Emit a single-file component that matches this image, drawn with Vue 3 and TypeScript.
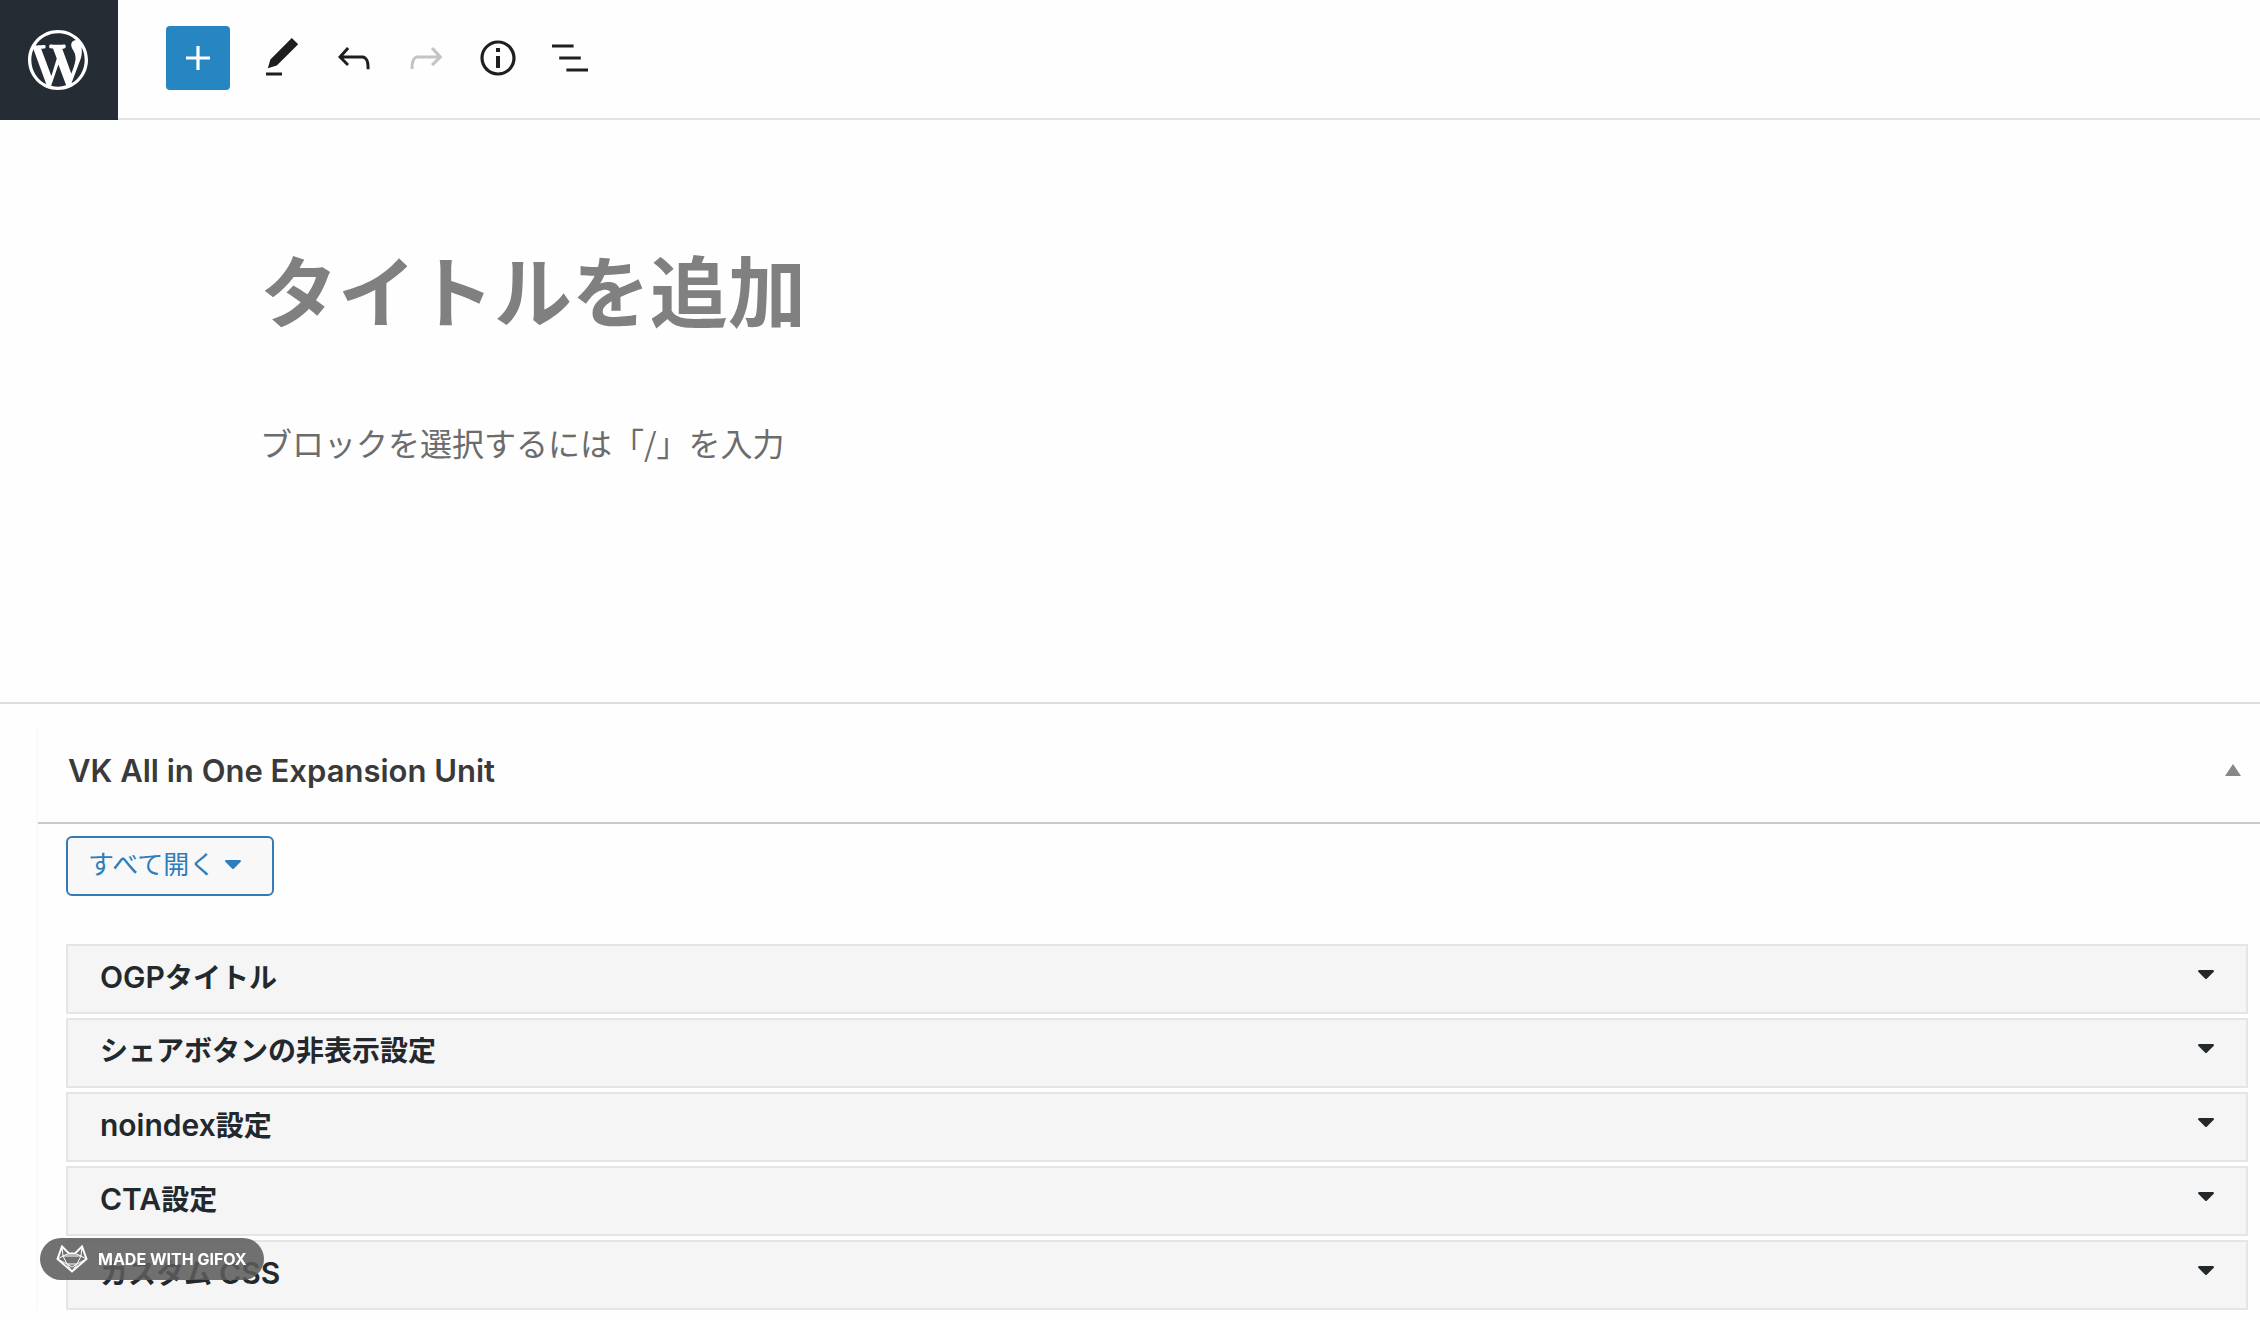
<script setup lang="ts">
import { computed, ref } from 'vue'

interface Tool {
  label: string
  path: string
  disabled?: boolean
}

interface Section {
  id: string
  parts: string[]
  open: boolean
}

const tools: Tool[] = [
  {
    label: 'ツール',
    path: 'M20.1 5.1L16.9 2 6.2 12.7l-1.3 4.4 4.5-1.3L20.1 5.1zM4 20.8h8v-1.5H4v1.5z',
  },
  {
    label: '元に戻す',
    path: 'M18.3 11.7c-.6-.6-1.4-.9-2.3-.9H6.7l2.9-3.3-1.1-1-4.5 5L8.5 16l1-1-2.7-2.7H16c.5 0 .9.2 1.3.5 1 1 1 3.4 1 4.5v.3h1.5v-.2c0-1.5 0-4.3-1.5-5.7z',
  },
  {
    label: 'やり直す',
    path: 'M15.6 6.5l-1.1 1 2.9 3.3H8c-.9 0-1.7.3-2.3.9-1.4 1.5-1.4 4.2-1.4 5.6v.2h1.5v-.3c0-1.1 0-3.5 1-4.5.3-.3.7-.5 1.3-.5h9.2L14.5 15l1.1 1.1 4.6-4.6-4.6-5z',
    disabled: true,
  },
  {
    label: '詳細',
    path: 'M12 3.2c-4.8 0-8.8 3.9-8.8 8.8 0 4.8 3.9 8.8 8.8 8.8 4.8 0 8.8-3.9 8.8-8.8 0-4.8-4-8.8-8.8-8.8zm0 16c-4 0-7.2-3.3-7.2-7.2C4.8 8 8 4.8 12 4.8s7.2 3.3 7.2 7.2c0 4-3.2 7.2-7.2 7.2zM11 17h2v-6h-2v6zm0-8h2V7h-2v2z',
  },
  {
    label: 'リスト表示',
    path: 'M13.8 5.2H3v1.5h10.8V5.2zm-3.6 12v1.5H21v-1.5H10.2zm7.2-6H6.6v1.5h10.8v-1.5z',
  },
]

const title = ref('')
const body = ref('')

// Latin runs are set a little larger than the Japanese around them.
const sections = ref<Section[]>(
  ['OGPタイトル', 'シェアボタンの非表示設定', 'noindex設定', 'CTA設定', 'カスタム CSS'].map((t) => ({
    id: t,
    parts: t.split(/([A-Za-z]+)/).filter(Boolean),
    open: false,
  })),
)

const isLatin = (part: string): boolean => /^[A-Za-z]/.test(part)

const allOpen = computed(() => sections.value.every((s) => s.open))

function toggleAll(): void {
  const next = !allOpen.value
  sections.value.forEach((s) => (s.open = next))
}
</script>

<template>
  <div class="editor">
    <header class="topbar">
      <a class="home" href="#" aria-label="投稿一覧を表示">
        <svg viewBox="-2 -2 24 24" aria-hidden="true">
          <path
            d="M20 10c0-5.51-4.49-10-10-10C4.48 0 0 4.49 0 10c0 5.52 4.48 10 10 10 5.51 0 10-4.48 10-10zM7.78 15.37L4.37 6.22c.55-.02 1.17-.08 1.17-.08.5-.06.44-1.13-.06-1.11 0 0-1.45.11-2.37.11-.18 0-.37 0-.58-.01C4.12 2.69 6.87 1.11 10 1.11c2.33 0 4.45.87 6.05 2.34-.68-.11-1.65.39-1.65 1.58 0 .74.45 1.36.9 2.1.35.61.55 1.36.55 2.46 0 1.49-1.4 5-1.4 5l-3.03-8.37c.54-.02.82-.17.82-.17.5-.05.44-1.25-.06-1.22 0 0-1.44.12-2.38.12-.87 0-2.33-.12-2.33-.12-.5-.03-.56 1.2-.06 1.22l.92.08 1.26 3.41zM17.41 10c.24-.64.74-1.87.43-4.25.7 1.29 1.05 2.71 1.05 4.25 0 3.29-1.73 6.24-4.4 7.78.97-2.59 1.94-5.2 2.92-7.78zM6.1 18.09C3.12 16.65 1.11 13.53 1.11 10c0-1.3.23-2.48.72-3.59C3.25 10.3 4.67 14.2 6.1 18.09zm4.03-6.63l2.58 6.98c-.86.29-1.76.45-2.71.45-.79 0-1.57-.11-2.29-.33.81-2.38 1.62-4.74 2.42-7.1z"
          />
        </svg>
      </a>
      <div class="toolbar" role="toolbar" aria-label="文書ツール">
        <button class="tool add" type="button" aria-label="ブロックを追加">
          <svg viewBox="0 0 24 24" aria-hidden="true">
            <path d="M18 11.2h-5.2V6h-1.6v5.2H6v1.6h5.2V18h1.6v-5.2H18z" />
          </svg>
        </button>
        <button
          v-for="tool in tools"
          :key="tool.label"
          class="tool"
          type="button"
          :aria-label="tool.label"
          :disabled="tool.disabled"
        >
          <svg viewBox="0 0 24 24" aria-hidden="true"><path :d="tool.path" /></svg>
        </button>
      </div>
    </header>

    <main class="canvas">
      <input v-model="title" class="title" type="text" aria-label="タイトル" placeholder="タイトルを追加" />
      <input
        v-model="body"
        class="paragraph"
        type="text"
        aria-label="ブロック"
        placeholder="ブロックを選択するには「/」を入力"
      />
    </main>

    <section class="metaboxes">
      <div class="metabox">
        <div class="metabox-head">
          <h2>VK All in One Expansion Unit</h2>
          <button class="collapse" type="button" aria-label="パネルを閉じる">
            <svg viewBox="0 0 16 12" aria-hidden="true"><path d="M8 0l8 12H0z" /></svg>
          </button>
        </div>
        <div class="metabox-body">
          <button class="open-all" type="button" @click="toggleAll">
            <span>すべて開く</span>
            <svg viewBox="0 0 16 9" aria-hidden="true">
              <path d="M1 0h14q1 0 1 1.500L9 8.500q-1 1-2 0L0 1.500q0-1.500 1-1.500z" />
            </svg>
          </button>
          <ul class="sections">
            <li v-for="section in sections" :key="section.id">
              <button
                class="section"
                type="button"
                :aria-expanded="section.open"
                @click="section.open = !section.open"
              >
                <span class="section-title"><span
                  v-for="part in section.parts"
                  :key="part"
                  :class="{ latin: isLatin(part) }"
                >{{ part }}</span></span>
                <svg viewBox="0 0 16 9" aria-hidden="true">
                  <path d="M1 0h14q1 0 1 1.500L9 8.500q-1 1-2 0L0 1.500q0-1.500 1-1.500z" />
                </svg>
              </button>
            </li>
          </ul>
        </div>
      </div>
    </section>

    <a class="badge" href="#">
      <svg viewBox="0 0 32 28" aria-hidden="true">
        <path class="outline" d="M6 1.500L13 8.500h6L26 1.500 30.500 14 16 26.500 1.500 14z" />
        <path d="M6 1.500L7 11 1.500 14 11 19l5 7.500 5-7.500 9.500-5L25 11l1-9.500M13 8.500L7 11h18l-6-2.500M7 11l4 8h10l4-8M11 19l5 3 5-3" />
      </svg>
      <span>MADE WITH GIFOX</span>
    </a>
  </div>
</template>

<style>
body {
  margin: 0;
  background: #fefefe;
}
</style>

<style scoped>
.editor {
  min-height: 100vh;
  background: #fefefe;
  color: #23282d;
  font-family: Inter, 'Noto Sans CJK JP', sans-serif;
}

button,
input {
  margin: 0;
  padding: 0;
  border: 0;
  background: none;
  color: inherit;
  font-family: inherit;
}

svg {
  display: block;
  fill: currentColor;
}

.topbar {
  display: flex;
  height: 120px;
}

.home {
  display: flex;
  align-items: center;
  width: 96px;
  padding-left: 22px;
  background: #262c34;
  color: #fff;
}

.home svg {
  width: 72px;
  height: 72px;
}

.toolbar {
  display: flex;
  flex: 1;
  align-items: center;
  gap: 8px;
  padding: 0 0 2px 48px;
  border-bottom: 2px solid #e2e2e2;
}

.tool {
  display: flex;
  align-items: center;
  justify-content: center;
  width: 64px;
  height: 64px;
  border-radius: 4px;
  color: #1e1e1e;
}

.tool svg {
  width: 48px;
  height: 48px;
}

.tool.add {
  margin-right: 12px;
  background: #2586c2;
  color: #fff;
}

.tool:disabled {
  color: #c4c4c4;
}

.canvas {
  display: flex;
  flex-direction: column;
  gap: 50px;
  padding: 108px 260px 216px;
}

.title,
.paragraph {
  width: 100%;
  outline: 0;
  font-family: 'Noto Sans CJK JP', sans-serif;
}

.title {
  height: 120px;
  font-size: 78px;
  font-weight: 700;
}

.paragraph {
  height: 88px;
  font-size: 32px;
}

.title::placeholder {
  color: #808080;
  opacity: 1;
}

.paragraph::placeholder {
  color: #6c6c6c;
  opacity: 1;
}

.metaboxes {
  padding: 24px 0 8px 36px;
  border-top: 2px solid #dedede;
}

.metabox {
  border-left: 2px solid #fafafa;
}

.metabox-head {
  display: flex;
  align-items: center;
  justify-content: space-between;
  height: 86px;
  padding: 0 19px 8px 30px;
  border-bottom: 2px solid #c9c9c9;
}

h2 {
  margin: 0;
  color: #3a3a3a;
  font-size: 31px;
  font-weight: 600;
  line-height: 40px;
}

.collapse {
  padding-bottom: 2px;
  color: #85878a;
}

.collapse svg {
  width: 16px;
  height: 12px;
}

.metabox-body {
  padding: 12px 12px 0 28px;
}

.open-all {
  display: flex;
  align-items: center;
  gap: 10px;
  height: 60px;
  padding: 0 31px 4px 20px;
  border: 2px solid #337ab7;
  border-radius: 6px;
  background: #f8f8f8;
  color: #2f7dba;
  font-size: 26px;
}

.open-all span {
  padding-bottom: 4px;
}

.open-all svg,
.section svg {
  width: 16px;
  height: 9px;
}

.sections {
  display: flex;
  flex-direction: column;
  gap: 4px;
  margin: 48px 0 0;
  padding: 0;
  list-style: none;
}

.section {
  display: flex;
  align-items: center;
  justify-content: space-between;
  width: 100%;
  height: 70px;
  padding: 0 32px 4px;
  border: 2px solid #e5e5e5;
  background: #f5f5f5;
  font-size: 28px;
  font-weight: 600;
  text-align: left;
}

.section-title {
  line-height: 40px;
  white-space: pre;
}

.latin {
  font-size: 30px;
}

.section svg {
  margin-bottom: 6px;
}

.badge {
  position: fixed;
  bottom: 40px;
  left: 40px;
  display: flex;
  align-items: center;
  gap: 10px;
  height: 42px;
  padding: 0 17px 0 16px;
  border-radius: 21px;
  background: rgba(92, 92, 92, 0.87);
  color: #fff;
  font-size: 16px;
  font-weight: 700;
  text-decoration: none;
}

.badge svg {
  width: 32px;
  height: 28px;
  fill: none;
  stroke: currentColor;
  stroke-width: 1;
}

.badge .outline {
  stroke-width: 2;
}
</style>
